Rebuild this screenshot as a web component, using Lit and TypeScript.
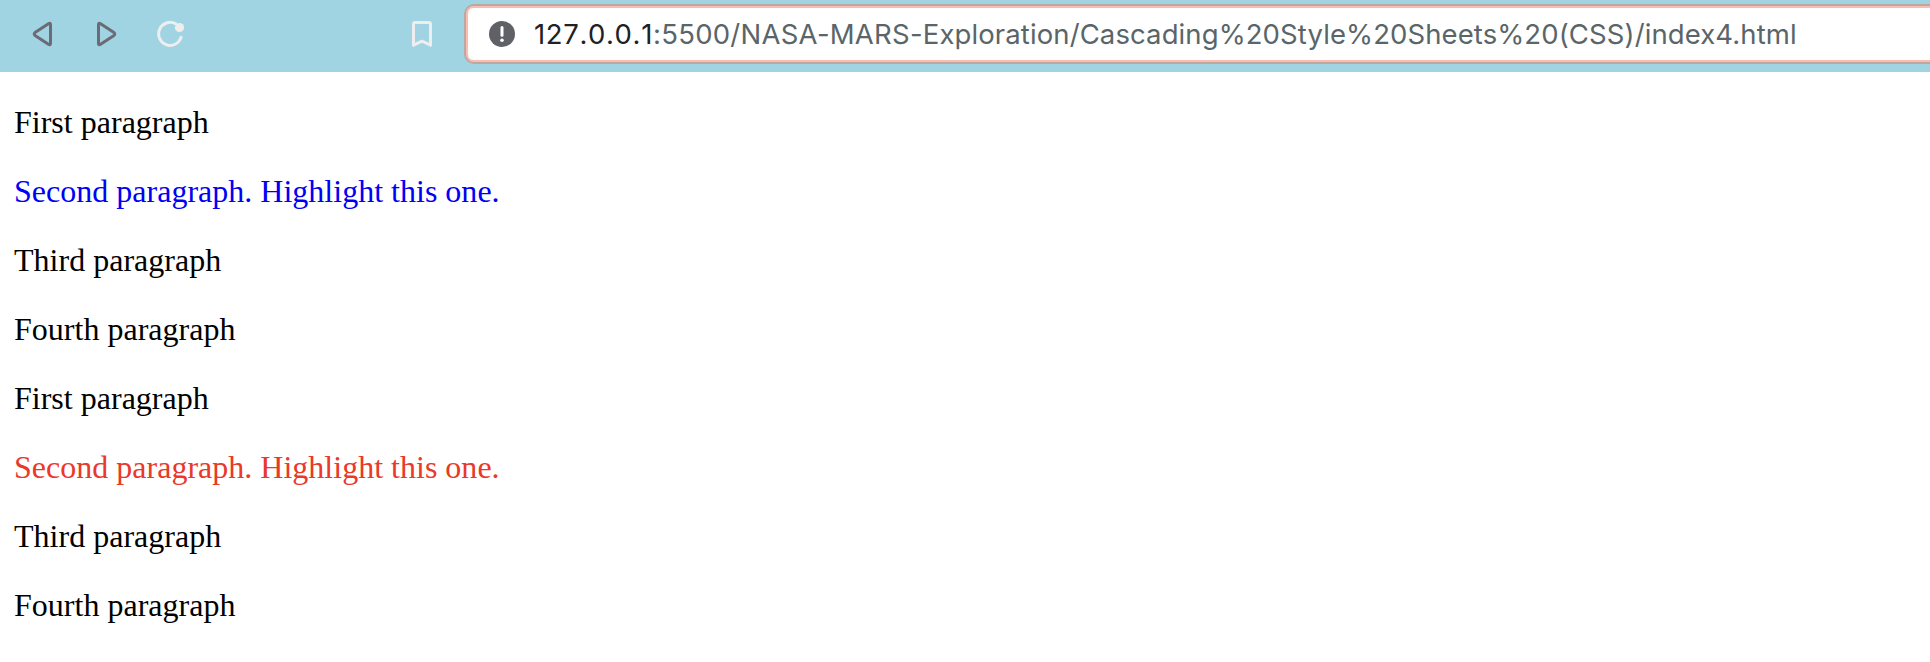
import { LitElement, html, css } from "lit";
import { customElement } from "lit/decorators.js";

@customElement("browser-toolbar")
class BrowserToolbar extends LitElement {
  static styles = css`
    :host { display: flex; height: 72px; box-sizing: border-box; padding: 4px 0 8px 28px; background: #a0d4e3; overflow: hidden; }
    .nav { display: flex; align-items: center; gap: 34px; width: 372px; flex: none; }
    .bookmark { display: flex; align-items: center; width: 64px; flex: none; }
    svg { display: block; flex: none; fill: none; stroke-linecap: round; stroke-linejoin: round; }
    .dark { stroke: #6c6b75; stroke-width: 3; }
    .light { stroke: #eeeeee; stroke-width: 3; }
    .dot { fill: #eeeeee; stroke: none; }
    .field { display: flex; align-items: center; flex: 1; min-width: 0; box-sizing: border-box; border: 2px solid #bfa6a0; border-right: 0; border-radius: 10px 0 0 10px; background: #fff; box-shadow: inset 0 2px #f9beb2, inset 0 -2px #f9beb2, inset 2px 0 #f9beb2; padding-left: 23px; gap: 19px; }
    .disc { fill: #606167; }
    .mark { stroke: #fff; stroke-width: 3; }
    .point { fill: #fff; }
    .url { font: 400 27.5px/36px Inter, "Liberation Sans", sans-serif; letter-spacing: 0.1px; color: #5a6569; white-space: pre; }
    .host { color: #202124; font-kerning: none; letter-spacing: 0.65px; }
    .root { letter-spacing: 0.25px; }
  `;
  render() {
    return html`
      <div class="nav">
        <svg width="30" height="30" viewBox="0 0 30 30"><path class="dark" d="M20.8 4.5 7.4 13.3q-2.4 1.7 0 3.4L20.8 25.5q1.7.8 1.7-.9V5.4q0-1.7-1.7-.9Z" /></svg>
        <svg width="30" height="30" viewBox="0 0 30 30"><path class="dark" d="M8.2 4.5 21.6 13.3q2.4 1.7 0 3.4L8.2 25.5q-1.7.8-1.7-.9V5.4q0-1.7 1.7-.9Z" /></svg>
        <svg width="30" height="30" viewBox="0 0 30 30"><path class="light" d="M19.5 4.7A11.5 11.5 0 1 0 25.1 18.4" /><circle class="dot" cx="23.5" cy="8.5" r="4.6" /></svg>
      </div>
      <div class="bookmark">
        <svg width="44" height="30" viewBox="0 0 44 30"><path class="light" d="M15 3.5h14q1.5 0 1.5 1.5V26.2L22 22.2 13.5 26.2V5q0-1.5 1.5-1.5Z" /></svg>
      </div>
      <div class="field">
        <svg width="26" height="26" viewBox="0 0 26 26"><circle class="disc" cx="13" cy="13" r="13" /><path class="mark" d="M13 6.5v7.8" /><circle class="point" cx="13" cy="19.3" r="1.8" /></svg>
        <div class="url"><span class="host">127.0.0.1</span><span class="root">:5500/NASA-MARS-</span>Exploration/Cascading%20Style%20Sheets%20(CSS)/index4.html</div>
      </div>
    `;
  }
}

@customElement("app-root")
class AppRoot extends LitElement {
  static styles = css`
    :host { display: block; height: 662px; background: #fff; overflow: hidden; }
    .page { display: flex; flex-direction: column; gap: 32px; padding: 32px 14px; font: 32px/37px "Liberation Serif", serif; letter-spacing: 0.01px; color: #000; }
    .line { margin: 0; }
    .blue { color: #0000f5; }
    .red { color: #ea3829; }
  `;
  render() {
    return html`
      <browser-toolbar></browser-toolbar>
      <main class="page">
        ${["blue", "red"].map(
          (tone) => html`
            <p class="line">First paragraph</p>
            <p class="line ${tone}">Second paragraph. Highlight this one.</p>
            <p class="line">Third paragraph</p>
            <p class="line">Fourth paragraph</p>
          `
        )}
      </main>
    `;
  }
}
